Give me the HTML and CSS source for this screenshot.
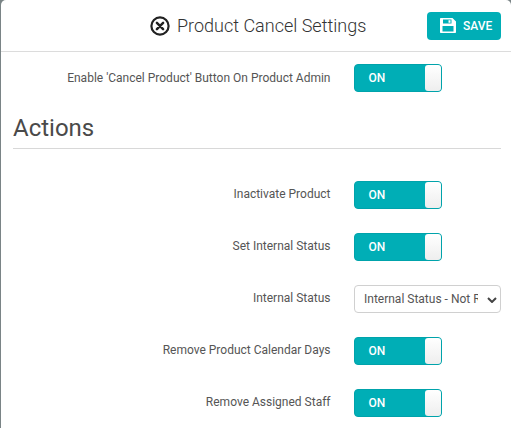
FILE: index.html
```html
<!DOCTYPE html>
<html lang="en">
<head>
<meta charset="utf-8">
<title>Product Cancel Settings</title>
<link rel="stylesheet" href="styles.css">
</head>
<body>
<div class="modal">
  <header class="head">
    <h1 class="title">
      <svg class="title-icon" viewBox="0 0 20 20" width="20" height="20" aria-hidden="true">
        <circle cx="10" cy="10" r="8.600" fill="none" stroke="#222" stroke-width="2.200"/>
        <path d="M6.900 6.900l6.200 6.200M13.100 6.900l-6.200 6.200" fill="none" stroke="#222" stroke-width="2.500" stroke-linecap="round"/>
      </svg>
      Product Cancel Settings
    </h1>
    <button class="save" type="button">
      <svg class="save-icon" viewBox="0 0 16 15" width="16" height="15" aria-hidden="true">
        <path fill-rule="evenodd" fill="#fff" d="M0 1C0 .4.4 0 1 0H12.500L16 3.500V14c0 .6-.4 1-1 1H1c-.6 0-1-.4-1-1zM3 1.500V5.500h8.500V1.500zM8.500 2.200h2v2.600h-2zM2.500 8v5.500h11V8z"/>
      </svg>
      SAVE
    </button>
  </header>
  <div class="row first">
    <span class="label">Enable 'Cancel Product' Button On Product Admin</span>
    <span class="toggle"><span class="on">ON</span><span class="knob"></span></span>
  </div>
  <h2 class="section">Actions</h2>
  <div class="rows">
    <div class="row">
      <span class="label">Inactivate Product</span>
      <span class="toggle"><span class="on">ON</span><span class="knob"></span></span>
    </div>
    <div class="row">
      <span class="label">Set Internal Status</span>
      <span class="toggle"><span class="on">ON</span><span class="knob"></span></span>
    </div>
    <div class="row">
      <span class="label">Internal Status</span>
      <span class="select-wrap">
        <select class="select"><option>Internal Status - Not Ready</option></select>
        <svg class="chevron" viewBox="0 0 10 6" width="10" height="6" aria-hidden="true">
          <path d="M1 1l4 4 4-4" fill="none" stroke="#444" stroke-width="2"/>
        </svg>
      </span>
    </div>
    <div class="row">
      <span class="label">Remove Product Calendar Days</span>
      <span class="toggle"><span class="on">ON</span><span class="knob"></span></span>
    </div>
    <div class="row">
      <span class="label">Remove Assigned Staff</span>
      <span class="toggle"><span class="on">ON</span><span class="knob"></span></span>
    </div>
  </div>
</div>
</body>
</html>
```
FILE: styles.css
```css
* { box-sizing: border-box; }
html, body { margin: 0; height: 100%; overflow: hidden; }
body { background: #7a8486; font-family: Roboto, "Liberation Sans", sans-serif; color: #444; }
.modal { height: 428px; margin-left: 1px; background: #fff; border-radius: 5px 5px 0 0; overflow: hidden; }
.head {
  height: 52px;
  border-bottom: 1px solid #dcdcdc;
  position: relative;
  display: flex;
  align-items: center;
  justify-content: flex-end;
  padding: 0 10px 0 0;
}
.title {
  position: absolute;
  left: 149px;
  top: 15px;
  margin: 0;
  display: flex;
  align-items: center;
  gap: 7px;
  font-size: 18px;
  line-height: 22px;
  font-weight: 300;
  color: #333;
  white-space: nowrap;
}
.save {
  width: 74px;
  height: 28px;
  border: 0;
  border-radius: 4px;
  background: #00aeb6;
  color: #fff;
  font: 500 12px Roboto, sans-serif;
  display: flex;
  align-items: center;
  gap: 7px;
  padding: 0 0 0 13px;
}
.row {
  display: grid;
  grid-template-columns: 329.500px 146px;
  column-gap: 23.500px;
  align-items: center;
  height: 28px;
}
.first { margin-top: 12px; }
.label { text-align: right; font-size: 12px; color: #555; margin-bottom: 2px; }
.first .label { margin-bottom: 0; }
.toggle {
  width: 88px;
  height: 28px;
  border: 1px solid #00a3ab;
  border-radius: 4px;
  background: #00aeb6;
  display: flex;
  justify-content: space-between;
  align-items: center;
  overflow: hidden;
}
.on { color: #fff; font-size: 12px; font-weight: 500; padding-left: 13.500px; }
.knob {
  width: 16px;
  height: 100%;
  background: linear-gradient(#fff, #eee);
  border-radius: 3px 0 0 3px;
}
.section {
  margin: 22px 0 0 12px;
  padding-bottom: 6px;
  border-bottom: 1px solid #d8d8d8;
  font-size: 24px;
  line-height: 28px;
  font-weight: 400;
  color: #4a4a4a;
  width: 488px;
}
.rows { display: flex; flex-direction: column; gap: 24px; margin-top: 32px; }
.select-wrap { position: relative; display: block; width: 147px; height: 28px; }
.select {
  appearance: none;
  display: block;
  width: 100%;
  height: 100%;
  font: 12px Roboto, sans-serif;
  color: #555;
  background: #fff;
  border: 1px solid #d0d0d0;
  border-radius: 4px;
  padding: 0 22px 0 9px;
}
.chevron { position: absolute; right: 4px; top: 12px; pointer-events: none; }
```
